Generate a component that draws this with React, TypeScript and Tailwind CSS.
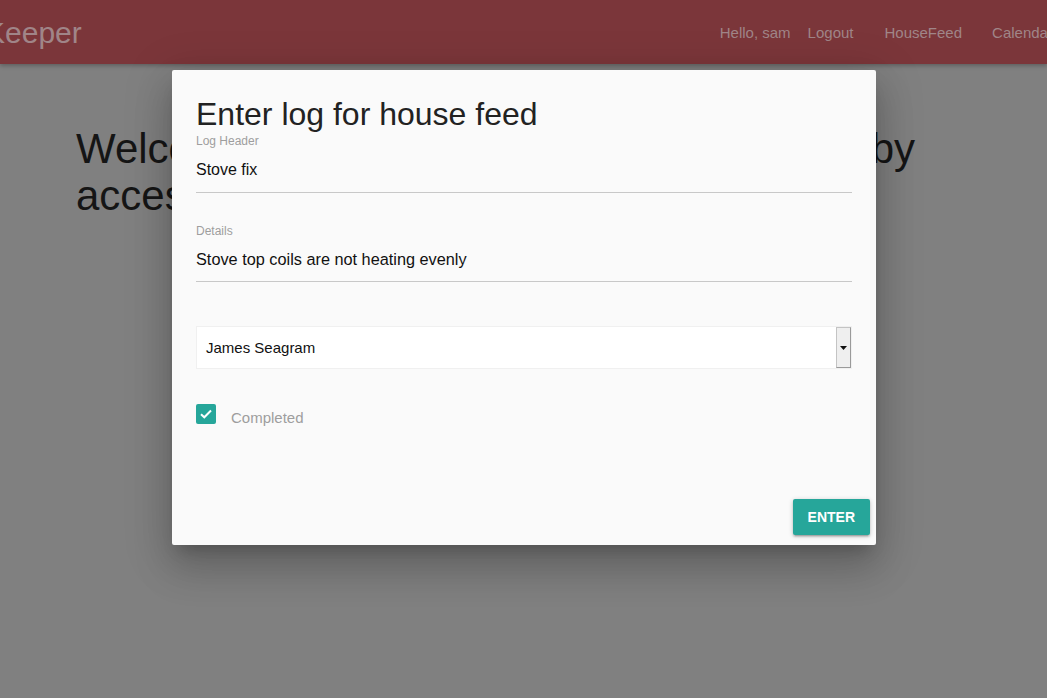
import React from "react";

const font = { fontFamily: '"Liberation Sans", Arial, sans-serif' };

export default function App() {
  return (
    <div className="relative h-[698px] w-[1047px] overflow-hidden bg-[#808080]" style={font}>
      {/* navbar */}
      <nav className="relative z-10 flex h-[64px] items-center overflow-hidden whitespace-nowrap bg-[#7b363a] shadow-[0_2px_4px_0_rgba(0,0,0,0.25)]">
        <span className="-ml-[15px] mt-[2px] text-[30px] leading-[64px] text-[#a08588]">Keeper</span>
        <div className="ml-[638px] mt-[2px] flex items-center text-[15px] text-[#a08588]">
          <span>Hello, sam</span>
          <span className="ml-[17px]">Logout</span>
          <span className="ml-[31px]">HouseFeed</span>
          <span className="ml-[30px]">Calendar</span>
        </div>
      </nav>

      {/* page content */}
      <div className="ml-[76px] mt-[61px] text-[42px] leading-[47px] text-[#151515]">
        <div className="flex w-[839px] justify-between whitespace-nowrap">
          <span>Welcome</span>
          <span>to</span>
          <span>HouseKeeper,</span>
          <span>start</span>
          <span>by</span>
        </div>
        <div className="whitespace-nowrap">accessing the features above</div>
      </div>

      {/* modal */}
      <div className="absolute left-[172px] top-[70px] z-20 flex h-[475px] w-[704px] flex-col rounded-[2px] bg-[#fafafa] shadow-[0_24px_38px_3px_rgba(0,0,0,0.14),0_9px_46px_8px_rgba(0,0,0,0.12),0_11px_15px_-7px_rgba(0,0,0,0.2)]">
        <div className="flex-1 px-[24px] pt-[24px]">
          <h4 className="h-[40px] text-[32px] leading-[40px] text-[#222]">Enter log for house feed</h4>

          <div className="h-[14px] text-[12px] leading-[14px] text-[#9e9e9e]">Log Header</div>
          <div className="flex h-[45px] items-center border-b border-[#c8c8c8] text-[16px] text-[#111]">
            Stove fix
          </div>

          <div className="mt-[31px] h-[14px] text-[12px] leading-[14px] text-[#9e9e9e]">Details</div>
          <div className="flex h-[44px] items-center border-b border-[#c8c8c8] text-[16.3px] text-[#111]">
            Stove top coils are not heating evenly
          </div>

          <div className="mt-[44px] flex h-[43px] items-stretch border border-[#f0f0f0] bg-white">
            <div className="flex flex-1 items-center pl-[9px] pt-[1px] text-[15px] text-[#111]">James Seagram</div>
            <div className="flex w-[15px] items-center justify-center border border-[#c4c4c4] border-b-[#9a9a9a] border-r-[#9a9a9a] bg-[#efefef]">
              <svg width="7" height="4" viewBox="0 0 7 4">
                <path d="M0 0H7L3.5 4Z" fill="#111" />
              </svg>
            </div>
          </div>

          <div className="mt-[35px] flex h-[20px] items-center">
            <div className="flex h-[20px] w-[20px] items-center justify-center rounded-[2px] bg-[#26a69a]">
              <svg width="14" height="12" viewBox="0 0 14 12">
                <path d="M2 6.2L5.3 9.3L12 2.5" fill="none" stroke="#fff" strokeWidth="2" />
              </svg>
            </div>
            <span className="ml-[15px] mt-[6px] text-[15px] leading-[17px] text-[#9e9e9e]">Completed</span>
          </div>
        </div>

        <div className="flex h-[56px] items-center justify-end px-[6px]">
          <button className="h-[36px] rounded-[2px] bg-[#26a69a] px-[15px] text-[14px] font-bold text-white shadow-[0_2px_2px_0_rgba(0,0,0,0.14),0_3px_1px_-2px_rgba(0,0,0,0.12),0_1px_5px_0_rgba(0,0,0,0.2)]">
            ENTER
          </button>
        </div>
      </div>
    </div>
  );
}
